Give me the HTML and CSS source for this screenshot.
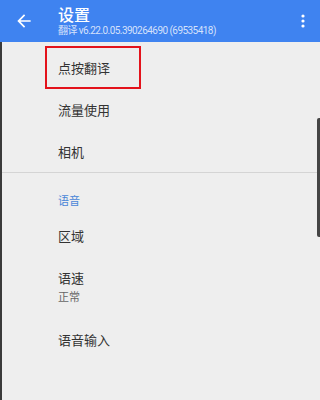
FILE: index.html
```html
<!DOCTYPE html>
<html lang="zh-CN">
<head>
<meta charset="utf-8">
<link rel="stylesheet" href="styles.css">
</head>
<body>
<div class="screen">
  <header class="appbar">
    <span class="back">
      <svg width="20" height="20" viewBox="0 0 24 24"><path fill="#fff" d="M20 11H7.83l5.59-5.59L12 4l-8 8 8 8 1.41-1.41L7.83 13H20v-2z"/></svg>
    </span>
    <div class="titles">
      <div class="title">设置</div>
      <div class="subtitle">翻译 v6.22.0.05.390264690 (69535418)</div>
    </div>
    <span class="more">
      <svg width="4" height="14" viewBox="0 0 4 14"><circle cx="2" cy="2" r="1.6" fill="#fff"/><circle cx="2" cy="7" r="1.6" fill="#fff"/><circle cx="2" cy="12" r="1.6" fill="#fff"/></svg>
    </span>
  </header>
  <main class="content">
    <div class="list">
      <div class="item">点按翻译</div>
      <div class="item">流量使用</div>
      <div class="item">相机</div>
    </div>
    <div class="divider"></div>
    <div class="section">语音</div>
    <div class="list">
      <div class="item">区域</div>
      <div class="item two">
        <div class="item-title">语速</div>
        <div class="item-sub">正常</div>
      </div>
      <div class="item">语音输入</div>
    </div>
    <div class="highlight"></div>
    <div class="scrollbar"></div>
  </main>
</div>
</body>
</html>
```

FILE: styles.css
```css
html, body {
  margin: 0;
  padding: 0;
}
body {
  width: 320px;
  height: 400px;
  overflow: hidden;
  background: #eeeeee;
  font-family: "Noto Sans CJK SC", "Noto Sans", sans-serif;
}
.screen {
  display: flex;
  flex-direction: column;
  height: 400px;
}
.appbar {
  height: 42px;
  background: #3f83f0;
  display: flex;
  align-items: center;
  color: #fff;
  flex: none;
}
.back {
  width: 20px;
  height: 20px;
  margin-left: 14px;
  display: flex;
}
.titles {
  margin-left: 24px;
  flex: 1;
  display: flex;
  flex-direction: column;
  margin-top: -2px;
}
.title {
  font-size: 16px;
  line-height: 20px;
  font-weight: 500;
}
.subtitle {
  font-family: "Roboto", "Noto Sans CJK SC", sans-serif;
  font-size: 10px;
  letter-spacing: -0.55px;
  line-height: 13px;
  color: rgba(255, 255, 255, 0.78);
}
.more {
  width: 4px;
  height: 14px;
  margin-right: 15px;
  display: flex;
}
.content {
  position: relative;
  flex: 1;
  border-left: 2px solid #3a3a3a;
  padding-top: 4px;
}
.list {
  display: flex;
  flex-direction: column;
}
.item {
  height: 42px;
  display: flex;
  align-items: center;
  padding-left: 56px;
  font-size: 13px;
  color: #333333;
}
.item.two {
  height: auto;
  flex-direction: column;
  align-items: flex-start;
  padding-top: 12px;
  padding-bottom: 14px;
}
.item-title {
  font-size: 13px;
  line-height: 20px;
  color: #333333;
}
.item-sub {
  font-size: 11px;
  line-height: 16px;
  color: #666666;
}
.divider {
  height: 1px;
  background: #d4d4d4;
}
.section {
  height: 41px;
  padding-left: 56px;
  padding-top: 20px;
  box-sizing: border-box;
  font-size: 11px;
  line-height: 14px;
  color: #4a86d8;
}
.highlight {
  position: absolute;
  left: 43px;
  top: 4px;
  width: 92px;
  height: 39px;
  border: 2px solid #e3121b;
}
.scrollbar {
  position: absolute;
  right: 0;
  top: 76px;
  width: 3px;
  height: 119px;
  background: #444444;
  border-radius: 2px 0 0 2px;
}
```
